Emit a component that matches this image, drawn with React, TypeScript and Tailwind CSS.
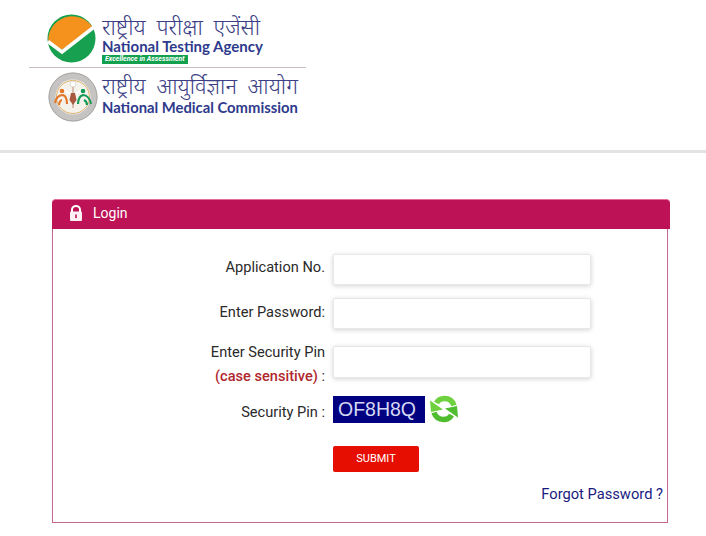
const HINDI = '"Noto Sans", "Noto Sans Devanagari", "Liberation Sans", sans-serif'

function NtaMark() {
  return (
    <svg width="49" height="49" viewBox="0 0 49 49" className="shrink-0">
      <circle cx="24.5" cy="24.500" r="24" fill="#16a04f" />
      <path d="M1.500 29 A24 24 0 0 1 46 14 L15 35.500 Z" fill="#f5921e" />
      <path d="M1 27.500 L15 38 L47 13" fill="none" stroke="#fff" strokeWidth="3.500" />
    </svg>
  )
}

function NmcMark() {
  return (
    <svg width="50" height="50" viewBox="0 0 50 50" className="shrink-0">
      <circle cx="25" cy="25" r="24.500" fill="#c6c4c2" />
      <circle cx="25" cy="25" r="24" fill="none" stroke="#aaa8a6" strokeWidth="1" />
      <circle cx="25" cy="25" r="17.500" fill="#f5f2ec" />
      <circle cx="25" cy="25" r="16.500" fill="none" stroke="#d7a24e" strokeWidth="0.800" />
      <circle cx="25" cy="12" r="3" fill="#fff" stroke="#dcd8d2" />
      <path d="M14 16l8 6M36 16l-8 6" stroke="#fff" strokeWidth="2" />
      <path d="M25 15v21" stroke="#b98a76" strokeWidth="1" />
      <path d="M23 21h4l1.500 7-3.500 5-3.500-5z" fill="#a9583f" />
      <circle cx="14" cy="19" r="2.300" fill="#e2772a" />
      <path d="M7 31c1-5 4-8 8-8 3 1 4 5 4 9M11 33c0-3 2-5 3-5" fill="none" stroke="#e2772a" strokeWidth="2.200" />
      <circle cx="35" cy="19" r="2.300" fill="#159a55" />
      <path d="M30 32c0-5 2-8 5-9 4 0 7 4 8 9M36 28c2 1 3 3 3 5" fill="none" stroke="#159a55" strokeWidth="2.200" />
    </svg>
  )
}

function LockMark() {
  return (
    <svg width="14" height="16" viewBox="0 0 14 16" className="shrink-0">
      <path d="M3 7V4.500a4 3.500 0 0 1 8 0V7" fill="none" stroke="#fff" strokeWidth="2" />
      <rect x="1" y="6.500" width="12" height="9.500" rx="1" fill="#fdf0f5" />
      <rect x="6.200" y="9.500" width="1.600" height="3.500" fill="#bd1256" />
    </svg>
  )
}

function RefreshMark() {
  return (
    <svg width="30" height="28" viewBox="0 0 30 28" className="shrink-0">
      <path d="M25 10.500C23.500 6 20 3.500 15.500 3.500 12 3.500 9 5 7.500 8" fill="none" stroke="#6fd040" strokeWidth="5.500" />
      <path d="M1 5.500 L2 17 L14 14.500 Z" fill="#6fd040" />
      <path d="M5 17.500C6.500 22 10 24.500 14.500 24.500 18 24.500 21 23 22.500 20" fill="none" stroke="#4fbd2f" strokeWidth="5.500" />
      <path d="M29 22.500 L28 11 L16 13.500 Z" fill="#4fbd2f" />
    </svg>
  )
}

function Field({ label, className }: { label: React.ReactNode; className: string }) {
  return (
    <div className={`flex ${className}`}>
      <div className="w-[272px] text-right text-[14.6px] leading-[24px] text-[#2a2a2a]">{label}</div>
      <input className="ml-2 w-[258px] h-[31px] bg-white border border-[#e8e8e8] rounded-[2px] shadow-[0_1px_5px_rgba(0,0,0,0.18)]" />
    </div>
  )
}

export default function App() {
  return (
    <div className="w-[706px] h-[536px] bg-white overflow-hidden font-['Roboto',sans-serif]">
      <header className="h-[153px] border-b-[3px] border-[#e3e3e3] pt-[12px] pl-[29px]">
        <div className="w-[277px] h-[56px] border-b border-[#c9bfc0] pl-[18px] flex gap-[6px] pt-[2px]">
          <NtaMark />
          <div>
            <div style={{ fontFamily: HINDI }} className="text-[22px] leading-[25px] font-light [word-spacing:5px] text-[#3d3f86] whitespace-nowrap">राष्ट्रीय परीक्षा एजेंसी</div>
            <div className="text-[15px] leading-[15px] font-bold text-[#2e3a8c] whitespace-nowrap font-['Lato',sans-serif]">National Testing Agency</div>
            <div className="mt-[1px] w-[86px] h-[9px] bg-[#13a04f] text-[7px] leading-[9px] italic font-bold text-white pl-[3px] whitespace-nowrap">Excellence in Assessment</div>
          </div>
        </div>
        <div className="flex gap-[4px] pl-[19px] pt-[4px]">
          <NmcMark />
          <div>
            <div style={{ fontFamily: HINDI }} className="text-[22px] leading-[27px] font-light [word-spacing:5px] text-[#3d3f86] whitespace-nowrap">राष्ट्रीय आयुर्विज्ञान आयोग</div>
            <div className="text-[14.8px] leading-[16px] font-bold text-[#2e3a8c] whitespace-nowrap font-['Lato',sans-serif]">National Medical Commission</div>
          </div>
        </div>
      </header>

      <main className="pt-[46px] pl-[52px]">
        <section className="w-[618px]">
          <div className="h-[30px] bg-[#bd1256] rounded-t-[4px] border-t border-[#e86a9a] flex items-center pl-[17px] pb-[3px] gap-[10px] text-white text-[14px]">
            <LockMark />
            <span>Login</span>
          </div>
          <div className="w-[616px] h-[294px] border border-t-0 border-[#c5668f] pt-[25px]">
            <Field label={<div className="pt-[1px]">Application No.</div>} className="h-[31px]" />
            <Field label={<div className="pt-[2px]">Enter Password:</div>} className="h-[31px] mt-[13px]" />
            <div className="flex mt-[11px]">
              <div className="w-[272px] text-right text-[14.6px] leading-[24px] text-[#2a2a2a]">
                <div>Enter Security Pin</div>
                <div><span className="text-[#b0272d] font-medium">(case sensitive)</span> :</div>
              </div>
              <input className="ml-2 mt-[6px] w-[258px] h-[32px] bg-white border border-[#e8e8e8] rounded-[2px] shadow-[0_1px_5px_rgba(0,0,0,0.18)]" />
            </div>
            <div className="flex items-start mt-[8px]">
              <div className="w-[272px] pt-[4px] text-right text-[14.6px] leading-[24px] text-[#2a2a2a]">Security Pin :</div>
              <div className="ml-2 w-[92px] h-[27px] bg-[#000080] text-[#d5d8f5] text-[19.5px] leading-[26px] pl-[5px] font-['Liberation_Sans',sans-serif]">OF8H8Q</div>
              <div className="ml-[4px] -mt-[1px]"><RefreshMark /></div>
            </div>
            <button className="block ml-[280px] mt-[22px] w-[86px] h-[26px] bg-[#e60e00] rounded-[2px] text-white text-[11px]">SUBMIT</button>
            <div className="text-right pr-[4px] mt-[12px] text-[14.7px] leading-[20px] text-[#1a1a80]">Forgot Password ?</div>
          </div>
        </section>
      </main>
    </div>
  )
}
